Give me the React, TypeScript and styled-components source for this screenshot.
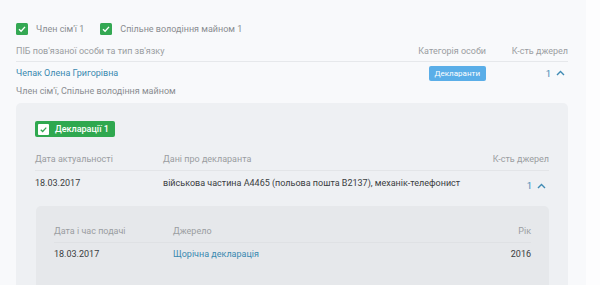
import styled, { createGlobalStyle } from "styled-components";

const GlobalStyle = createGlobalStyle`
  html, body {
    margin: 0;
    padding: 0;
    background: #fdfdfe;
    font-family: Roboto, "Noto Sans", sans-serif;
  }
`;

const Check = ({ size = 12 }: { size?: number }) => (
  <svg width={size} height={size} viewBox="0 0 12 12">
    <rect width="12" height="12" rx="1.5" fill="#34a853" />
    <path d="M3 6.2 L5.1 8.2 L9 3.9" stroke="#fff" strokeWidth="1.4" fill="none" />
  </svg>
);

const WhiteCheck = () => (
  <svg width="11" height="11" viewBox="0 0 12 12">
    <rect width="12" height="12" rx="1" fill="#fff" />
    <path d="M3 6.2 L5.1 8.2 L9 3.9" stroke="#34a853" strokeWidth="1.4" fill="none" />
  </svg>
);

const Chevron = () => (
  <svg width="9" height="6" viewBox="0 0 9 6">
    <path d="M1 5 L4.5 1.5 L8 5" stroke="#3f8ab3" strokeWidth="1.4" fill="none" />
  </svg>
);

const App = () => {
  return (
    <>
      <GlobalStyle />
      <Panel>
        <Filters>
          <Filter>
            <Check />
            <span>Член сім'ї 1</span>
          </Filter>
          <Filter>
            <Check />
            <span>Спільне володіння майном 1</span>
          </Filter>
        </Filters>

        <TopHead>
          <HeadCell>ПІБ пов'язаної особи та тип зв'язку</HeadCell>
          <HeadCell $align="right">Категорія особи</HeadCell>
          <HeadCell $align="right">К-сть джерел</HeadCell>
        </TopHead>

        <PersonRow>
          <Name>Чепак Олена Григорівна</Name>
          <BadgeCell>
            <Badge>Декларанти</Badge>
          </BadgeCell>
          <Count>
            1 <Chevron />
          </Count>
        </PersonRow>
        <Relation>Член сім'ї, Спільне володіння майном</Relation>

        <Card>
          <GreenTag>
            <WhiteCheck />
            <span>Декларації 1</span>
          </GreenTag>

          <DeclHead>
            <HeadCell>Дата актуальності</HeadCell>
            <HeadCell>Дані про декларанта</HeadCell>
            <HeadCell $align="right">К-сть джерел</HeadCell>
          </DeclHead>
          <DeclRow>
            <Cell>18.03.2017</Cell>
            <Cell>військова частина А4465 (польова пошта В2137), механік-телефонист</Cell>
            <Count $offset>
              1 <Chevron />
            </Count>
          </DeclRow>

          <Inner>
            <SourceHead>
              <HeadCell>Дата і час подачі</HeadCell>
              <HeadCell>Джерело</HeadCell>
              <HeadCell $align="right">Рік</HeadCell>
            </SourceHead>
            <SourceRow>
              <Cell>18.03.2017</Cell>
              <Link>Щорічна декларація</Link>
              <Cell $align="right">2016</Cell>
            </SourceRow>
          </Inner>
        </Card>
      </Panel>
    </>
  );
};

export default App;

const Panel = styled.div`
  width: 554px;
  height: 285px;
  overflow: hidden;
  padding: 0 16px;
  background: #f8f9fb;
  box-sizing: content-box;
`;

const Filters = styled.div`
  display: flex;
  gap: 16px;
  padding-top: 22px;
  height: 13px;
`;

const Filter = styled.label`
  display: flex;
  align-items: center;
  gap: 8px;
  font-size: 9px;
  color: #8a8d91;
`;

const HeadCell = styled.div<{ $align?: string }>`
  font-size: 9px;
  color: #9a9da1;
  text-align: ${(p) => p.$align || "left"};
  white-space: nowrap;
`;

const TopHead = styled.div`
  display: grid;
  grid-template-columns: minmax(0, 1fr) 120px 82px;
  align-items: center;
  margin-top: 5px;
  height: 21px;
  border-bottom: 1px solid #e6e8eb;
  width: 552px;
`;

const PersonRow = styled.div`
  display: grid;
  grid-template-columns: minmax(0, 1fr) 120px 82px;
  align-items: center;
  height: 22px;
  width: 552px;
`;

const Name = styled.div`
  font-size: 9px;
  color: #3a89b0;
`;

const BadgeCell = styled.div`
  display: flex;
  justify-content: flex-end;
`;

const Badge = styled.span`
  background: #5aaee8;
  color: #fff;
  font-size: 8px;
  border-radius: 2px;
  padding: 3px 6px;
  line-height: 9px;
`;

const Count = styled.div<{ $offset?: boolean }>`
  display: flex;
  justify-content: flex-end;
  align-items: center;
  gap: 5px;
  font-size: 9.5px;
  color: #3f8ab3;
  padding-right: 3px;
  ${(p) => (p.$offset ? "margin-top: 5px;" : "")}
`;

const Relation = styled.div`
  font-size: 9px;
  color: #8a8d91;
  height: 14px;
  line-height: 14px;
`;

const Card = styled.div`
  margin-top: 5px;
  width: 514px;
  background: #eef0f3;
  border-radius: 5px;
  padding: 18px 19px 20px;
`;

const GreenTag = styled.div`
  display: flex;
  width: fit-content;
  align-items: center;
  gap: 6px;
  height: 16px;
  padding: 0 6px 0 3px;
  background: #2fa84f;
  border-radius: 2px;
  color: #fff;
  font-size: 9px;
  font-weight: 500;
`;

const DeclHead = styled.div`
  display: grid;
  grid-template-columns: 128px minmax(0, 1fr) 90px;
  align-items: center;
  margin-top: 14px;
  height: 16px;
  padding-bottom: 3px;
  border-bottom: 1px solid #e3e5e8;
`;

const DeclRow = styled.div`
  display: grid;
  grid-template-columns: 128px minmax(0, 1fr) 90px;
  align-items: center;
  height: 24px;
`;

const Cell = styled.div<{ $align?: string }>`
  font-size: 9px;
  color: #3a3d41;
  text-align: ${(p) => p.$align || "left"};
  white-space: nowrap;
`;

const Link = styled.div`
  font-size: 9px;
  color: #3a89b0;
`;

const Inner = styled.div`
  margin-top: 11px;
  margin-left: 1px;
  background: #e6e8eb;
  border-radius: 5px;
  padding: 17px 18px 30px;
`;

const SourceHead = styled.div`
  display: grid;
  grid-template-columns: 119px minmax(0, 1fr) 90px;
  align-items: center;
  height: 16px;
  padding-bottom: 3px;
  border-bottom: 1px solid #dfe1e4;
`;

const SourceRow = styled.div`
  display: grid;
  grid-template-columns: 119px minmax(0, 1fr) 90px;
  align-items: center;
  height: 22px;
`;
